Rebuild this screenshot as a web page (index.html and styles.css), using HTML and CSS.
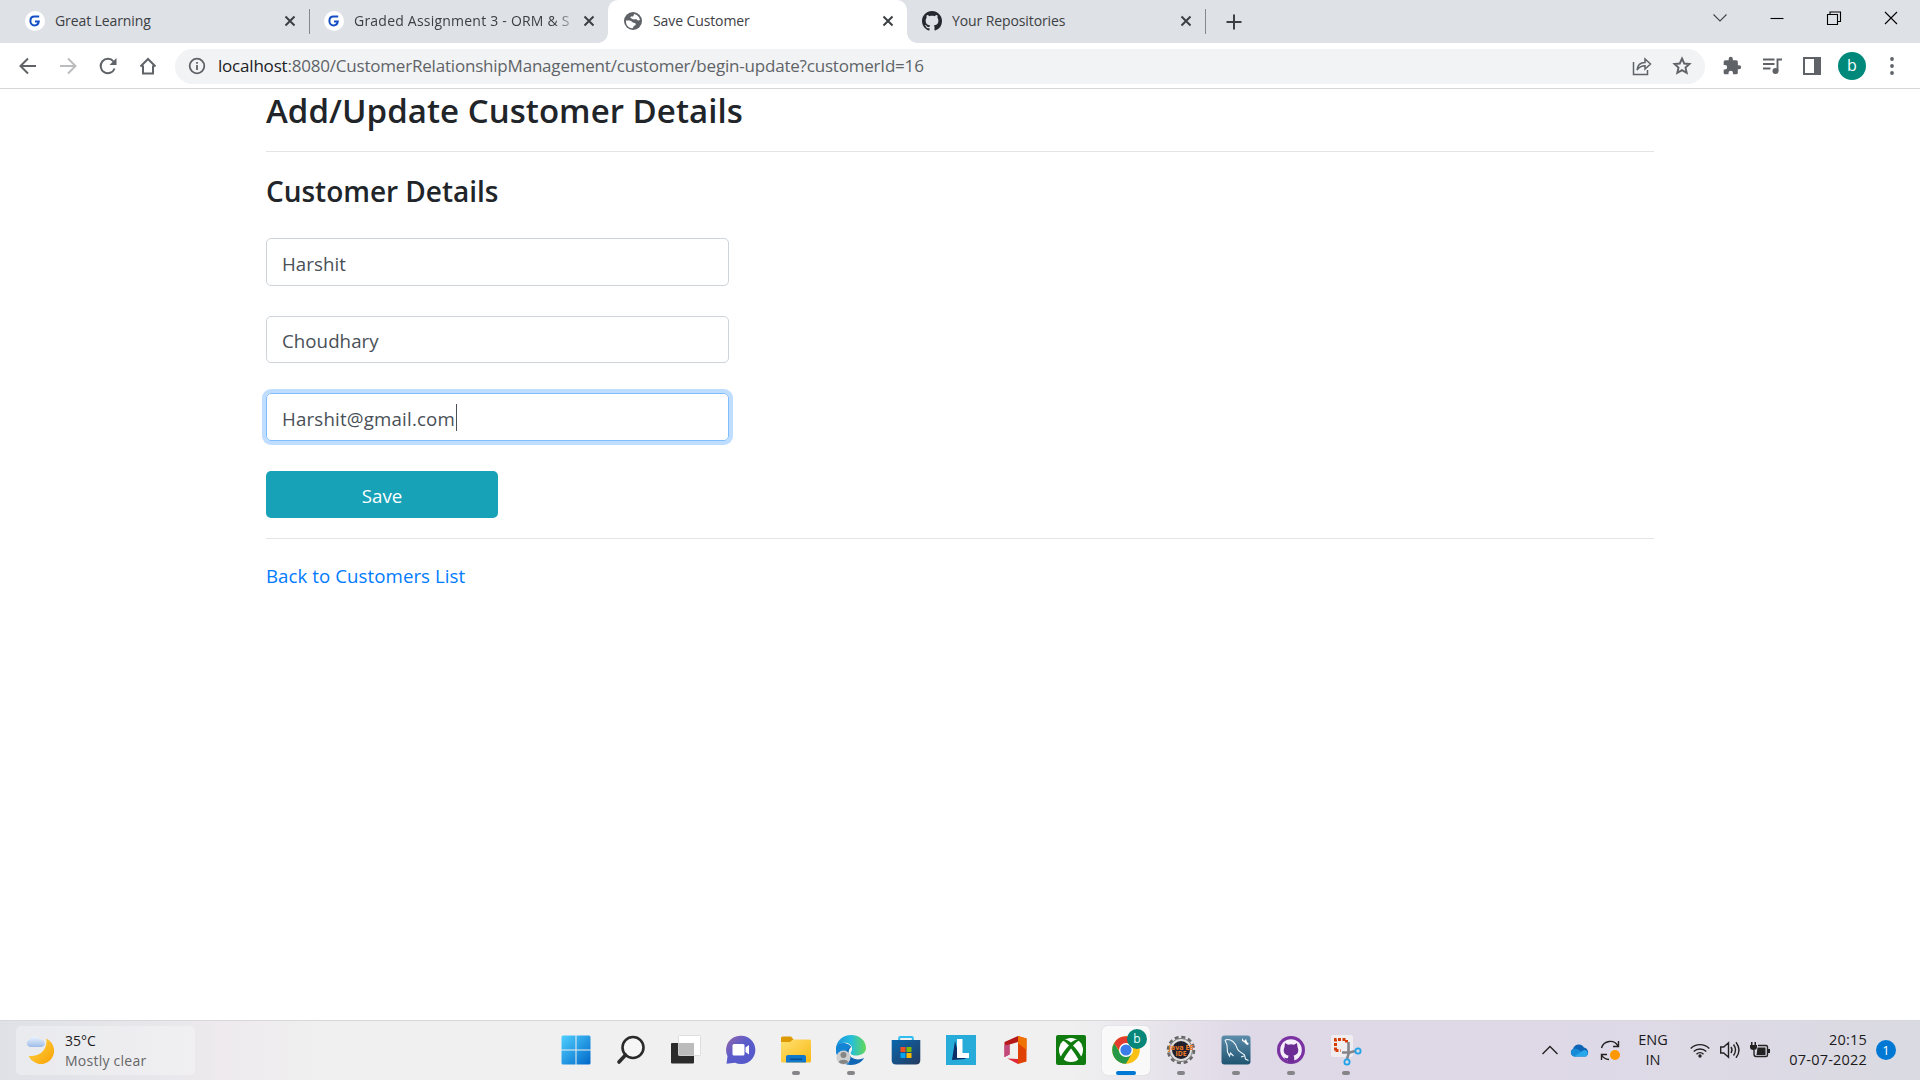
FILE: index.html
```html
<!DOCTYPE html>
<html lang="en">
<head>
<meta charset="utf-8">
<title>Save Customer</title>
<link rel="stylesheet" href="styles.css">
</head>
<body>
<header class="browser">
  <div class="tabstrip">
    <div class="tab tab-first">
      <svg class="fav" viewBox="0 0 20 20"><circle cx="10" cy="10" r="10" fill="#fff"/><path d="M14.200 5.600H9.500C6.700 5.600 5.400 7.600 5.400 10s1.600 4.400 4.100 4.400c2.800 0 4-1.700 4.300-4H10" fill="none" stroke="#1450c4" stroke-width="2"/></svg>
      <span class="tab-title">Great Learning</span>
      <svg class="tab-close" viewBox="0 0 12 12"><path d="M1.500 1.500l9 9m0-9l-9 9"/></svg>
    </div>
    <i class="tab-sep"></i>
    <div class="tab tab-second">
      <svg class="fav" viewBox="0 0 20 20"><circle cx="10" cy="10" r="10" fill="#fff"/><path d="M14.200 5.600H9.500C6.700 5.600 5.400 7.600 5.400 10s1.600 4.400 4.100 4.400c2.800 0 4-1.700 4.300-4H10" fill="none" stroke="#1450c4" stroke-width="2"/></svg>
      <span class="tab-title faded">Graded Assignment 3 - ORM &amp; S</span>
      <svg class="tab-close" viewBox="0 0 12 12"><path d="M1.500 1.500l9 9m0-9l-9 9"/></svg>
    </div>
    <div class="tab tab-active">
      <svg class="fav" viewBox="0 0 20 20"><circle cx="10" cy="10" r="9" fill="#5f6368"/><path d="M3 9.500c3-.3 5 0 6 1.200s2.500.8 3.500 1.800-.5 2-1.500 2.500-.5 2-1.800 2.300C5 17 2.600 13.500 3 9.500zM11 3c3 .5 5.500 3 6 6-1.500.8-2.500.3-3.300-.5S11 9 9.500 8 7 7 7.500 6s2.500 0 3-1z" fill="#fff"/></svg>
      <span class="tab-title">Save Customer</span>
      <svg class="tab-close" viewBox="0 0 12 12"><path d="M1.500 1.500l9 9m0-9l-9 9"/></svg>
    </div>
    <div class="tab tab-last">
      <svg class="fav" viewBox="0 0 16 16"><path fill="#24292f" d="M8 0C3.580 0 0 3.580 0 8c0 3.540 2.290 6.530 5.470 7.590.4.070.55-.17.55-.38 0-.19-.01-.82-.01-1.490-2.010.37-2.530-.49-2.690-.94-.09-.23-.48-.94-.82-1.130-.28-.15-.68-.52-.01-.53.63-.01 1.080.58 1.230.82.72 1.210 1.870.87 2.330.66.070-.52.280-.87.510-1.070-1.780-.2-3.640-.89-3.640-3.950 0-.87.310-1.590.820-2.150-.08-.2-.36-1.020.080-2.120 0 0 .67-.21 2.200.82.640-.18 1.320-.27 2-.27s1.360.09 2 .27c1.530-1.040 2.200-.82 2.200-.82.440 1.100.16 1.920.08 2.120.51.56.82 1.270.82 2.150 0 3.070-1.870 3.750-3.650 3.950.29.25.54.73.54 1.480 0 1.070-.01 1.930-.01 2.200 0 .21.150.46.550.38A8.010 8.010 0 0 0 16 8c0-4.420-3.580-8-8-8z"/></svg>
      <span class="tab-title">Your Repositories</span>
      <svg class="tab-close" viewBox="0 0 12 12"><path d="M1.500 1.500l9 9m0-9l-9 9"/></svg>
    </div>
    <i class="tab-sep"></i>
    <svg class="new-tab" viewBox="0 0 16 16"><path d="M8 .5v15M.5 8h15"/></svg>
    <div class="window-controls">
      <svg viewBox="0 0 14 14"><path d="M.5 3.500L7 10l6.500-6.500" stroke="#444"/></svg>
      <svg viewBox="0 0 14 14"><path d="M.5 7.500h13"/></svg>
      <svg viewBox="0 0 14 14"><path d="M.5 3.500h10v10H.5zM3 3.500V1h10.500v9.500h-3"/></svg>
      <svg viewBox="0 0 14 14"><path d="M1 1l12 12M13 1L1 13"/></svg>
    </div>
  </div>
  <div class="toolbar">
    <div class="nav">
      <svg viewBox="0 0 18 18"><path d="M17 9H2M9 1.500L1.500 9 9 16.500"/></svg>
      <svg class="disabled" viewBox="0 0 18 18"><path d="M1 9h15M9 1.500L16.500 9 9 16.500"/></svg>
      <svg viewBox="0 0 18 18"><path d="M15.600 11.500A7.200 7.200 0 1 1 14.500 4.500"/><path d="M17.500 1v7h-7z" fill="#5f6368" stroke="none"/></svg>
      <svg viewBox="0 0 18 18"><path d="M1.500 9.500L9 2l7.500 7.500M4 8.500V16.500h10V8.500"/></svg>
    </div>
    <div class="omnibox">
      <svg class="info" viewBox="0 0 18 18"><circle cx="9" cy="9" r="7.300"/><path d="M9 8v5M9 5v1.800"/></svg>
      <span class="url"><b>localhost</b>:8080/CustomerRelationshipManagement/customer/begin-update?customerId=16</span>
      <svg class="share" viewBox="0 0 20 20"><path d="M1.500 6v12.500h14V14M5 14c.5-5 3.500-7.500 8-7.500V3l5.500 5-5.500 5V9.800C9.500 9.800 7 11 5 14z"/></svg>
      <svg class="star" viewBox="0 0 20 20"><path d="M10 2.500l2.200 5 5.300.5-4 3.600 1.200 5.300-4.700-2.800-4.700 2.800 1.200-5.300-4-3.600 5.300-.5z"/></svg>
    </div>
    <div class="actions">
      <svg viewBox="0 0 24 24"><path fill="#5f6368" d="M20.500 11H19V7a2 2 0 0 0-2-2h-4V3.500a2.500 2.500 0 0 0-5 0V5H4a2 2 0 0 0-2 2v3.800h1.500a2.700 2.700 0 0 1 0 5.400H2V20c0 1.100.9 2 2 2h3.800v-1.500a2.700 2.700 0 0 1 5.400 0V22H17a2 2 0 0 0 2-2v-4h1.500a2.500 2.500 0 0 0 0-5z"/></svg>
      <svg viewBox="0 0 20 20"><path d="M1 3.500h11.500M1 8h11.500M1 12.500h7.500M15.500 15V3.500H20" fill="none" stroke="#5f6368" stroke-width="1.900"/><circle cx="13.500" cy="15" r="3" fill="#5f6368"/></svg>
      <svg viewBox="0 0 20 20"><path d="M2 2h16v16H2z" fill="none" stroke="#5f6368" stroke-width="2"/><path d="M12 2h6v16h-6z" fill="#5f6368"/></svg>
      <span class="avatar">b</span>
      <svg viewBox="0 0 20 20" fill="#5f6368"><circle cx="10" cy="3" r="1.900"/><circle cx="10" cy="10" r="1.900"/><circle cx="10" cy="17" r="1.900"/></svg>
    </div>
  </div>
</header>

<main class="page">
  <h1>Add/Update Customer Details</h1>
  <hr>
  <h2>Customer Details</h2>
  <form class="form">
    <div class="field">Harshit</div>
    <div class="field field-short">Choudhary</div>
    <div class="field focused">Harshit@gmail.com<i class="caret"></i></div>
    <button type="button" class="save">Save</button>
  </form>
  <hr class="hr-bottom">
  <a class="back">Back to Customers List</a>
</main>

<footer class="taskbar">
  <div class="weather">
    <svg viewBox="0 0 30 30"><defs><linearGradient id="mo" x2="1" y2="1"><stop stop-color="#ffd84d"/><stop offset="1" stop-color="#f9a000"/></linearGradient><linearGradient id="cl" x2="0" y2="1"><stop stop-color="#eef5ff"/><stop offset="1" stop-color="#9fbde8"/></linearGradient></defs><path d="M20.500 3.500A12.800 12.800 0 1 1 3.500 20C14 22 22.500 14 20.500 3.500z" fill="url(#mo)"/><path d="M4.500 11.500a3.500 3.500 0 0 1 0-6.800 5.300 5.300 0 0 1 10 0 3.500 3.500 0 0 1 2 6.800z" fill="url(#cl)"/></svg>
    <div class="weather-text"><span>35°C</span><span class="muted">Mostly clear</span></div>
  </div>
  <div class="apps">
    <div class="app"><svg viewBox="0 0 30 30"><defs><linearGradient id="w" x2="1" y2="1"><stop stop-color="#4fd0ff"/><stop offset="1" stop-color="#0067c9"/></linearGradient></defs><path d="M.5 2q0-1.500 1.500-1.500h12.500v14H.5zM15.500.5H28q1.500 0 1.500 1.500v12.500h-14zM.5 15.500h14v14H2q-1.500 0-1.500-1.500zM15.500 15.500h14V28q0 1.500-1.500 1.500H15.500z" fill="url(#w)"/></svg></div>
    <div class="app"><svg viewBox="0 0 30 30"><circle cx="17" cy="12.500" r="10.500" fill="#f6f6f6" stroke="#2b2b2b" stroke-width="2.600"/><path d="M9.500 20L3 27" stroke="#2b2b2b" stroke-width="3.600" stroke-linecap="round"/></svg></div>
    <div class="app"><svg viewBox="0 0 30 30"><rect y="8" width="23" height="20.500" rx="1" fill="#2b2b2b"/><rect x="7.500" y=".5" width="22" height="20" rx="1" fill="#fff" stroke="#dedede"/><path d="M7.500 8H23v12.500H7.500z" fill="#bcbcbc"/></svg></div>
    <div class="app"><svg viewBox="0 0 30 30"><defs><linearGradient id="c" x2="1" y2="1"><stop offset=".1" stop-color="#8a63ae"/><stop offset=".45" stop-color="#5a5ccc"/><stop offset="1" stop-color="#5558c8"/></linearGradient></defs><path d="M15 .7a14.200 14.200 0 1 1-6 27L.5 28.700l1-7.500A14.200 14.200 0 0 1 15 .7z" fill="url(#c)"/><rect x="6.500" y="9" width="12" height="11.500" rx="1.500" fill="#fff"/><path d="M19.500 12.500L23 10v9.500L19.500 17z" fill="#fff"/></svg></div>
    <div class="app"><svg viewBox="0 0 30 30"><defs><linearGradient id="f" x2="1" y2="1"><stop stop-color="#ffe070"/><stop offset="1" stop-color="#f9b916"/></linearGradient></defs><path d="M0 8V3q0-1.500 1.500-1.500H10L13 5v4H0z" fill="#dd9a05"/><path d="M0 7h9l3-2.500h16.500Q30 4.500 30 6v20q0 1.500-1.500 1.500h-27Q0 27.500 0 26z" fill="url(#f)"/><path d="M5 27.500V22q0-2 2-2h16q2 0 2 2v5.500z" fill="#0f78cc"/><path d="M9 24.200h12" stroke="#064a8c" stroke-width="1.400"/></svg><i class="dot"></i></div>
    <div class="app"><svg viewBox="0 0 30 30"><defs><linearGradient id="e" x2="1"><stop stop-color="#1b91dc"/><stop offset=".5" stop-color="#25bddd"/><stop offset="1" stop-color="#62d854"/></linearGradient></defs><path d="M15 0C7 0 0 6 0 14c4-9 15-7 16-1 .500 3-2 4-1 6 3 3 15 2 15-6C30 6 24 0 15 0z" fill="url(#e)"/><path d="M0 14c0 10 7 16 15 16 6 0 11-3 13-7-6 3-13 1-15-4-1-3 0-5 2-7-3-5-13-4-15 2z" fill="#0f66b4"/><path d="M0 14c0-6 10-9 15-2-7 2-6 13-1 17C6 30 0 23 0 14z" fill="#1484d4"/><circle cx="7.500" cy="22.500" r="7" fill="#cfcfcf"/><circle cx="7.500" cy="20" r="3" fill="#858585"/><path d="M2.500 27a5.500 4 0 0 1 10 0 7 7 0 0 1-10 0z" fill="#858585"/></svg><i class="dot"></i></div>
    <div class="app"><svg viewBox="0 0 30 30"><defs><linearGradient id="s" x2="1" y2="1"><stop stop-color="#0868ae"/><stop offset="1" stop-color="#253a60"/></linearGradient></defs><path d="M8.200 7V3q0-1 1-1h11.600q1 0 1 1v4" fill="none" stroke="#30bdf2" stroke-width="2"/><path d="M.7 5h28.600v20q0 4.500-4.500 4.500H5.200Q.7 29.500.7 25z" fill="url(#s)"/><path d="M9.500 12h5v5h-5z" fill="#f25022"/><path d="M15.500 12h5v5h-5z" fill="#7fba00"/><path d="M9.500 18h5v5h-5z" fill="#00a4ef"/><path d="M15.500 18h5v5h-5z" fill="#ffb900"/></svg></div>
    <div class="app"><svg viewBox="0 0 30 30"><path d="M0 0h30v30H0z" fill="#27acd9"/><path d="M9 6L6 25l13-1 4-4-11-3z" fill="#0b2e68"/><path d="M11 4h5.500v14H23v5H11z" fill="#fff"/></svg></div>
    <div class="app"><svg viewBox="0 0 30 30"><path d="M17 1l8.500 2.500v23L17 29z" fill="#e04205"/><path d="M17 1l8.500 2.500V15L17 8z" fill="#f07200"/><path d="M17 1L3.500 7v15l5-2.500V9.500L17 7z" fill="#b41818"/><path d="M3.500 10v12l5-2.500V9.500z" fill="#c2487d"/><path d="M6.500 23.500L17 29v-5z" fill="#df2b38"/></svg></div>
    <div class="app"><svg viewBox="0 0 30 30"><rect width="30" height="30" rx="2" fill="#107c10"/><circle cx="15" cy="15" r="12" fill="#fff"/><path d="M5.500 5c4-1.500 7 .5 9.500 2.500C17.500 5.500 20.500 3.500 24.500 5 22 5.500 19.500 8 17 10.500c3.500 3.500 7 8 9 13L23 26c-1.500-4-5-8.500-8-12.500C12 17.500 8.500 22 7 26l-3-2.500c2-5 5.500-9.500 9-13C10.500 8 8 5.500 5.500 5z" fill="#107c10"/></svg></div>
    <div class="app current"><svg viewBox="0 0 30 30"><circle cx="15" cy="15" r="13.800" fill="#fbc116"/><path d="M3 8.200a13.800 13.800 0 0 1 24 0H15L10 18z" fill="#e33b2e"/><path d="M3 8.200a13.800 13.800 0 0 0 12 20.600L21 18l-11 1z" fill="#279847"/><circle cx="15" cy="15" r="7" fill="#fff"/><circle cx="15" cy="15" r="5.600" fill="#3a7de8"/></svg><span class="badge">b</span><i class="dot"></i></div>
    <div class="app"><svg viewBox="0 0 30 30"><circle cx="15" cy="15" r="13" fill="none" stroke="#666" stroke-width="2.500" stroke-dasharray="4 2.800"/><circle cx="15" cy="15" r="11.600" fill="#ddd" stroke="#777"/><circle cx="15" cy="15" r="9" fill="#22202c"/><text class="java" x="2.500" y="14.500" textLength="25" lengthAdjust="spacingAndGlyphs">Java EE</text><text class="java" x="9.500" y="21" textLength="11" lengthAdjust="spacingAndGlyphs">IDE</text></svg><i class="dot"></i></div>
    <div class="app"><svg viewBox="0 0 30 30"><defs><linearGradient id="q" x2="0" y2="1"><stop stop-color="#5d8dab"/><stop offset="1" stop-color="#1f5471"/></linearGradient></defs><rect x=".5" y=".5" width="29" height="29" rx="3" fill="url(#q)"/><path d="M4 5c6-2 11 3 12.500 9 1 3 5 4 7 6l1 4 3 1.500M4 5l2 5 .5 7 2 4 1-3 3 3M23 21l-3 1" fill="none" stroke="#eaf3f8" stroke-width="1.100"/><path d="M21 3l2 3 2-2 1 3 2 2-2 1-3-3-2-1z" fill="#fff"/></svg><i class="dot"></i></div>
    <div class="app"><svg viewBox="0 0 30 30"><circle cx="15" cy="15" r="14" fill="#7a32a2"/><circle cx="15" cy="15" r="10.800" fill="#f5effa"/><path d="M9 8l3 1.700q3-.7 6 0L21 8l.5 4c2 4.500 0 8-4 8.500l.7 1.500v5.500H12V25c-2 .5-3-.5-4-2.500 2 .5 2.500 1 4 .5l.5-2.500c-4-.5-6-4-4-8.500z" fill="#6b2c94"/></svg><i class="dot"></i></div>
    <div class="app"><svg viewBox="0 0 30 30"><rect width="22" height="22" rx="2" fill="#efedf0"/><path d="M4.500 15.500v-11h11v3M4.500 15.500h5" fill="none" stroke="#d83b01" stroke-width="3" stroke-dasharray="3 1.500"/><path d="M17.500 7v12l-1.500 5M11 17.500h8l5-1.500" fill="none" stroke="#858489" stroke-width="2.600"/><circle cx="27" cy="16" r="2.600" fill="none" stroke="#20a3e8" stroke-width="1.800"/><circle cx="16" cy="27" r="2.600" fill="none" stroke="#20a3e8" stroke-width="1.800"/></svg><i class="dot"></i></div>
  </div>
  <div class="tray">
    <svg class="chev" viewBox="0 0 16 10"><path d="M.5 9L8 1.500 15.500 9"/></svg>
    <svg class="cloud" viewBox="0 0 20 13"><path d="M4 12.500A4 4 0 0 1 3 5a6 6 0 0 1 11-1.500 5 5 0 0 1 2 9z" fill="#0f65b5"/><path d="M3 5q3-1 6 1l6 4-10 2.500A4 4 0 0 1 3 5z" fill="#178ad8"/><path d="M4 12.500L14 6a3.500 3.500 0 0 1 2 6.500z" fill="#28a8ea"/></svg>
    <svg class="sync" viewBox="0 0 20 20"><path d="M1.500 8A9 9 0 0 1 18 6M18.500 1v5.500H13M1.500 20v-5.500H7M2 15.500Q4 19 9 19.500"/><circle cx="15" cy="15" r="5" fill="#ff9800" stroke="none"/></svg>
    <div class="lang"><span>ENG</span><span>IN</span></div>
    <svg class="wifi" viewBox="0 0 20 15"><path d="M.7 5.500a13.200 13.200 0 0 1 18.600 0M3.700 8.500a9 9 0 0 1 12.600 0M6.500 11.200a5 5 0 0 1 7 0"/><circle cx="10" cy="13" r="1.700" fill="#222" stroke="none"/></svg>
    <svg class="sound" viewBox="0 0 20 18"><path d="M.7 6h3L8.500 1.700v14.600L3.700 12h-3zM11 6q2 3 0 6M13.500 3.500q4 5.500 0 11M16 1.200q6 7.800 0 15.600"/></svg>
    <svg class="power" viewBox="0 0 20 16"><path d="M4 8v4q0 2.500 2 2.500h10q1.500 0 1.500-1.500V5q0-1.500-1.500-1.500H8"/><path class="solid" d="M7.500 5.500H15.500v7.500H6.500zM18 7h2v4h-2zM0 3h7v2q0 3-3.500 3T0 5zM1 0h1.500v3H1zM4.500 0H6v3H4.500z"/></svg>
    <div class="clock"><span>20:15</span><span>07-07-2022</span></div>
    <span class="notice">1</span>
  </div>
</footer>
</body>
</html>
```
FILE: styles.css
```css
* { box-sizing: border-box; }
body {
  margin: 0;
  width: 1920px;
  height: 1080px;
  overflow: hidden;
  display: flex;
  flex-direction: column;
  background: #fff;
  color: #212529;
  font-family: "Open Sans", "Noto Sans", sans-serif;
}
svg { display: block; flex: none; overflow: visible; }

/* Browser window */
.browser { height: 89px; border-bottom: 1px solid #d5d6d8; flex: none; }
.tabstrip { height: 43px; background: #dee1e6; display: flex; align-items: center; }
.tab { display: flex; align-items: center; height: 43px; padding-bottom: 1px; font-size: 14px; color: #3c4043; }
.fav { width: 20px; height: 20px; }
.tab-title { margin-left: 10px; padding-bottom: 2px; flex: 1; white-space: nowrap; letter-spacing: -.1px; }
.faded { letter-spacing: .22px; -webkit-mask-image: linear-gradient(90deg, #000 200px, rgba(0,0,0,.2) 220px); mask-image: linear-gradient(90deg, #000 200px, rgba(0,0,0,.2) 220px); }
.tab-close { width: 12px; height: 12px; fill: none; stroke: #3c4043; stroke-width: 2; }
.tab-first { width: 309px; padding: 0 13px 1px 25px; }
.tab-second { width: 298px; padding: 0 13px 1px 14px; }
.tab-active { width: 299px; padding: 0 13px 1px 15px; background: #fff; border-radius: 10px 10px 0 0; position: relative; }
.tab-active::before, .tab-active::after { content: ""; position: absolute; bottom: 0; width: 10px; height: 10px; }
.tab-active::before { left: -10px; background: radial-gradient(circle at 0 0, #dee1e6 9.500px, #fff 10px); }
.tab-active::after { right: -10px; background: radial-gradient(circle at 100% 0, #dee1e6 9.500px, #fff 10px); }
.tab-last { width: 298px; padding: 0 13px 1px 15px; }
.tab-sep { width: 1px; height: 25px; background: #85888d; }
.new-tab { width: 16px; height: 16px; margin-left: 20px; fill: none; stroke: #3c4043; stroke-width: 2; }
.window-controls { margin: 0 22px 7px auto; display: flex; gap: 43px; }
.window-controls svg { width: 14px; height: 14px; fill: none; stroke: #000; stroke-width: 1.100; }
.toolbar { height: 45px; display: flex; align-items: center; }
.nav { display: flex; gap: 22px; padding-left: 19px; width: 175px; }
.nav svg { width: 18px; height: 18px; fill: none; stroke: #5f6368; stroke-width: 2; }
.nav .disabled { stroke: #babcbe; }
.omnibox { width: 1530px; height: 35px; margin-top: 1px; border-radius: 18px; background: #f1f3f4; display: flex; align-items: center; padding: 0 13px; }
.info { width: 18px; height: 18px; fill: none; stroke: #5f6368; stroke-width: 1.800; }
.url { margin-left: 12px; padding-bottom: 2px; flex: 1; font-size: 17px; letter-spacing: -.2px; color: #5f6368; white-space: nowrap; }
.url b { font-weight: 400; color: #202124; }
.share, .star { width: 20px; height: 20px; fill: none; stroke: #5f6368; stroke-width: 1.500; }
.star { margin-left: 20px; stroke-width: 1.900; }
.actions { display: flex; align-items: center; gap: 20px; padding-left: 17px; }
.actions svg { width: 20px; height: 20px; }
.avatar { width: 28px; height: 28px; margin: 0 -4px; border-radius: 50%; background: #00897b; color: #fff; font-size: 16px; line-height: 27px; text-align: center; }

/* Customer form */
.page { width: 1388px; margin: 0 auto; flex: 1; font-size: 18.700px; letter-spacing: .05px; }
h1, h2 { margin: 0; font-weight: 600; }
h1 { font-size: 33px; line-height: 42px; height: 62px; padding-top: 1px; letter-spacing: .05px; }
h2 { font-size: 28px; line-height: 36px; height: 66px; margin-top: 20px; padding-top: 1px; letter-spacing: -.02px; }
hr { margin: 0; border: 0; border-top: 1px solid #e4e4e4; }
.field { width: 463px; height: 48px; margin-bottom: 30px; padding: 3px 15px 0; border: 1px solid #ced4da; border-radius: 5px; color: #495057; display: flex; align-items: center; line-height: 30px; }
.field-short { height: 47px; }
.focused { border-color: #80bdff; box-shadow: 0 0 0 4px #bfdeff; letter-spacing: .18px; }
.caret { width: 1px; height: 27px; margin: -3px 0 0 1px; background: #495057; }
.save { display: block; width: 232px; height: 47px; padding: 2px 0 0; border: 0; border-radius: 5px; background: #17a2b8; color: #fff; font: inherit; }
.hr-bottom { margin-top: 20px; }
.back { display: block; margin-top: 22px; line-height: 30px; color: #007bff; }

/* Taskbar */
.taskbar { height: 60px; flex: none; display: flex; align-items: center; padding-bottom: 1px; border-top: 1px solid #d8d8dc; background: linear-gradient(90deg, #dfe1e7 0, #e9e8ec 180px, #eeeaed 220px, #f0f0f0 320px, #f0f0f0 1070px, #dfd8e7 1250px, #dfd9e7 1540px, #dadae2 1920px); }
.weather { width: 179px; height: 49px; margin-left: 16px; border-radius: 5px; background: rgba(255,255,255,.3); display: flex; align-items: center; padding-left: 9px; }
.weather svg { width: 31px; height: 31px; }
.weather-text { display: flex; flex-direction: column; margin-left: 9px; padding-top: 1px; font-size: 14px; line-height: 20px; color: #1d1d1d; }
.muted { color: #666; letter-spacing: .25px; }
.apps { margin-left: 357px; display: flex; gap: 7px; }
.app { width: 48px; height: 49px; display: flex; align-items: center; justify-content: center; position: relative; border-radius: 5px; }
.app svg { width: 30px; height: 30px; }
.dot { position: absolute; left: 20px; bottom: 0; width: 8px; height: 4px; border-radius: 2px; background: #858487; }
.current { background: #f9f9fa; box-shadow: 0 0 1px #bbb; }
.current .dot { left: 14px; width: 20px; background: #0078d4; }
.badge { position: absolute; left: 25px; top: 3px; width: 20px; height: 20px; border-radius: 50%; background: #07867a; color: #e9fffc; font-size: 12px; line-height: 19px; text-align: center; }
.java { font: 700 7px "Open Sans", sans-serif; fill: #ee7c28; }
.tray { display: flex; align-items: center; flex: 1; padding-left: 172px; color: #1b1b1b; font-size: 14.500px; }
.tray svg { fill: none; stroke: #222; stroke-width: 1.400; }
.chev { width: 16px; height: 10px; }
.cloud { width: 20px; height: 13px; margin-left: 12px; }
.tray .cloud { stroke: none; }
.sync { width: 20px; height: 20px; margin-left: 10px; }
.lang, .clock { display: flex; flex-direction: column; line-height: 20px; }
.lang { width: 30px; margin-left: 18px; align-items: center; }
.wifi { width: 20px; height: 15px; margin-left: 22px; }
.sound { width: 20px; height: 18px; margin-left: 10px; }
.power { width: 20px; height: 16px; margin-left: 10px; }
.solid { fill: #222; stroke: none; }
.clock { width: 80px; margin-left: 17px; align-items: flex-end; letter-spacing: .2px; }
.notice { width: 20px; height: 20px; margin-left: 9px; border-radius: 50%; background: #0078d4; color: #fff; font-size: 13px; line-height: 20px; text-align: center; }
```
